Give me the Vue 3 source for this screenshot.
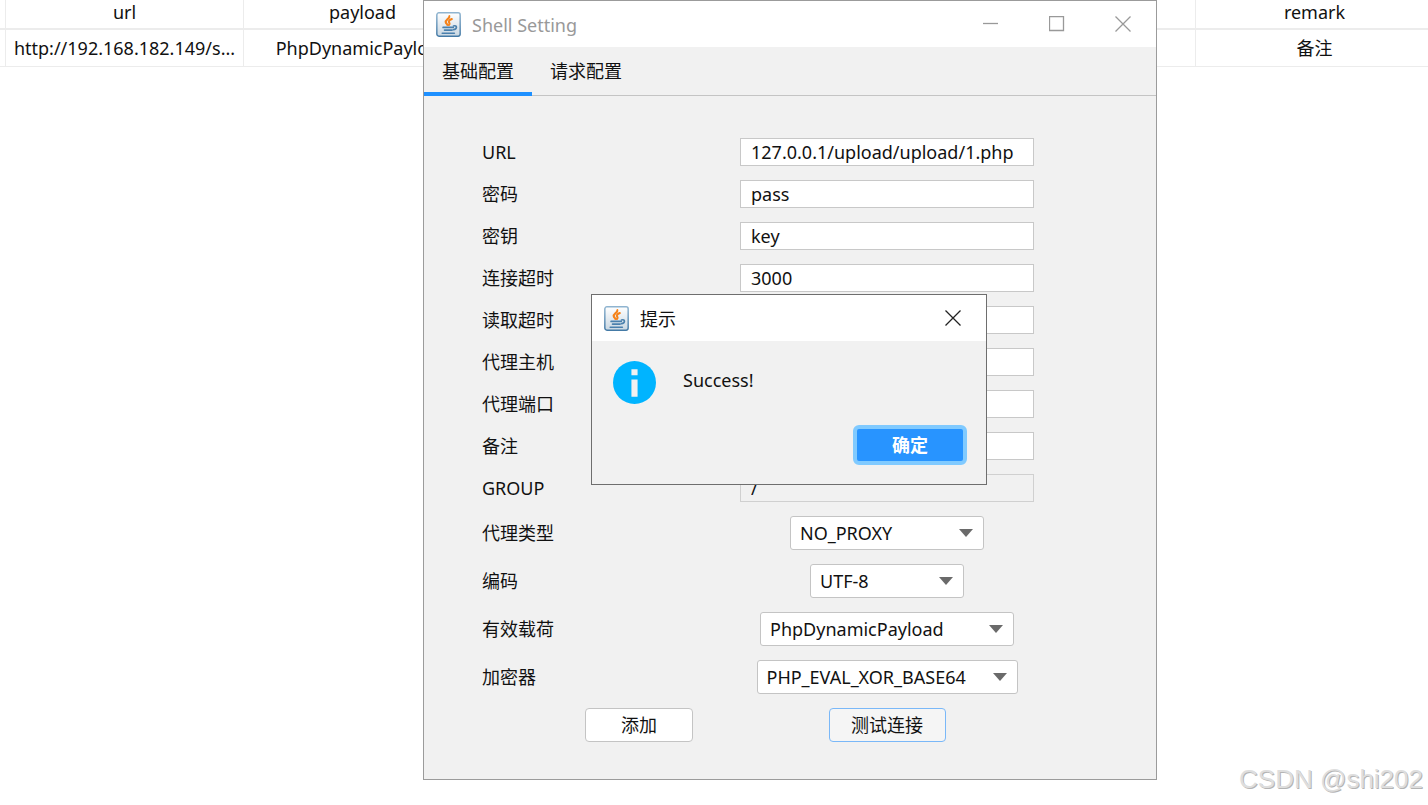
<template>
    <main class="desktop">
        <div class="shells">
            <table>
                <colgroup>
                    <col class="edge">
                    <col v-for="n in 6" :key="n">
                </colgroup>
                <thead>
                    <tr><th v-for="(name, i) in columns" :key="i">{{name}}</th></tr>
                </thead>
                <tbody>
                    <tr><td v-for="(cell, i) in shell" :key="i">{{cell}}</td></tr>
                </tbody>
            </table>
        </div>

        <section class="window setting">
            <header class="title-bar">
                <svg class="java" viewBox="0 0 24 24">
                    <use href="#java-cup" />
                </svg>
                <h1 class="title muted">Shell Setting</h1>
                <button class="win-btn" aria-label="Minimize">
                    <svg viewBox="0 0 16 16"><path d="M0 7.5H15" /></svg>
                </button>
                <button class="win-btn" aria-label="Maximize">
                    <svg viewBox="0 0 16 16"><path d="M.5 .5H14.5V14.5H.5Z" /></svg>
                </button>
                <button class="win-btn" aria-label="Close">
                    <svg viewBox="0 0 16 16"><path d="M.5 .5L15.5 15.5M15.5 .5L.5 15.5" /></svg>
                </button>
            </header>

            <nav class="tabs">
                <button v-for="tab in tabs" :key="tab" class="tab" :class="{active: tab === curTab}" @click="curTab = tab">{{tab}}</button>
            </nav>

            <form @submit.prevent="showTip = true">
                <div class="fields">
                    <div v-for="f in fields" :key="f.id" class="row">
                        <label :for="f.id">{{f.label}}</label>
                        <input :id="f.id" v-model="f.value" type="text" :disabled="f.disabled">
                    </div>
                    <div v-for="s in selects" :key="s.id" class="row">
                        <label :for="s.id">{{s.label}}</label>
                        <div class="combo" :style="{width: s.width + 'px'}">
                            <select :id="s.id" v-model="s.value">
                                <option>{{s.value}}</option>
                            </select>
                            <svg class="arrow" viewBox="0 0 14 8"><path d="M0 0H14L7 8Z" /></svg>
                        </div>
                    </div>
                </div>
                <div class="actions">
                    <button type="button" class="btn add">添加</button>
                    <button type="submit" class="btn test">测试连接</button>
                </div>
            </form>
        </section>

        <section v-if="showTip" class="window tip" role="dialog" aria-labelledby="tip-title">
            <header class="title-bar">
                <svg class="java" viewBox="0 0 24 24">
                    <use href="#java-cup" />
                </svg>
                <h2 id="tip-title" class="title">提示</h2>
                <button class="win-btn dark" aria-label="Close" @click="showTip = false">
                    <svg viewBox="0 0 16 16"><path d="M.5 .5L15.5 15.5M15.5 .5L.5 15.5" /></svg>
                </button>
            </header>
            <div class="message">
                <svg class="info" viewBox="0 0 42 42">
                    <circle cx="21" cy="21" r="21" fill="#00b4ff" />
                    <path d="M18 8h6v6h-6zM18 18h6v17h-6z" fill="#f1f1f1" />
                </svg>
                <p>Success!</p>
            </div>
            <div class="tip-actions">
                <button class="ok" @click="showTip = false">确定</button>
            </div>
        </section>

        <div class="watermark">CSDN @shi202</div>

        <svg class="defs" aria-hidden="true">
            <defs>
                <linearGradient id="java-bg" x1="0" y1="0" x2="0" y2="1">
                    <stop offset="0" stop-color="#ffffff" />
                    <stop offset="1" stop-color="#c9d7e2" />
                </linearGradient>
                <linearGradient id="java-edge" x1="0" y1="0" x2="0" y2="1">
                    <stop offset="0" stop-color="#8fb4d0" />
                    <stop offset="1" stop-color="#447aa6" />
                </linearGradient>
                <symbol id="java-cup" viewBox="0 0 24 24">
                    <rect x=".8" y=".8" width="22.4" height="22.4" rx="2" fill="url(#java-bg)" stroke="url(#java-edge)" stroke-width="1.4" />
                    <g fill="none" stroke="#f58219" stroke-width="2" stroke-linecap="round">
                        <path d="M12.8 4C13.4 6.4 8.6 7.4 9.4 10C9.7 11 10.6 11.6 11 12.4" />
                        <path d="M15.2 6.8C12.2 8 11.8 9.2 12.8 10.4C13.4 11.2 13 11.8 12.4 12.4" />
                    </g>
                    <g fill="none" stroke="#4a80ad" stroke-width="1.6" stroke-linecap="round">
                        <path d="M6.8 14.8H16.6M8.2 17.4H15.4M6 20.4H17.6" />
                        <path d="M16.8 13.4C20.6 12.4 20.6 16.4 16.6 17" />
                    </g>
                </symbol>
            </defs>
        </svg>
    </main>
</template>

<script setup>
    import {ref} from "vue";

    const columns = ['', 'url', 'payload', '', '', '', 'remark'];
    const shell = ['', 'http://192.168.182.149/s...', 'PhpDynamicPayload', '', '', '', '备注'];

    const tabs = ['基础配置', '请求配置'];
    const curTab = ref('基础配置');
    const showTip = ref(true);

    const fields = ref([
        {id: 'url', label: 'URL', value: '127.0.0.1/upload/upload/1.php'},
        {id: 'password', label: '密码', value: 'pass'},
        {id: 'secret', label: '密钥', value: 'key'},
        {id: 'conn-timeout', label: '连接超时', value: '3000'},
        {id: 'read-timeout', label: '读取超时', value: ''},
        {id: 'proxy-host', label: '代理主机', value: ''},
        {id: 'proxy-port', label: '代理端口', value: ''},
        {id: 'remark', label: '备注', value: ''},
        {id: 'group', label: 'GROUP', value: '/', disabled: true},
    ]);

    const selects = ref([
        {id: 'proxy-type', label: '代理类型', value: 'NO_PROXY', width: 194},
        {id: 'encoding', label: '编码', value: 'UTF-8', width: 154},
        {id: 'payload', label: '有效载荷', value: 'PhpDynamicPayload', width: 254},
        {id: 'cryption', label: '加密器', value: 'PHP_EVAL_XOR_BASE64', width: 261},
    ]);
</script>

<style>
    body {
        margin: 0;
        background: #fff;
    }
</style>

<style scoped>
    * {
        box-sizing: border-box;
    }

    .desktop {
        position: relative;
        min-height: 100vh;
        overflow: hidden;
        color: #111;
        font-family: 'Noto Sans', 'Noto Sans CJK SC', sans-serif;
        font-size: 18px;
        line-height: 24px;
    }

    button, input, select {
        margin: 0;
        color: inherit;
        font: inherit;
    }

    /* shell list behind the windows */
    .shells {
        overflow: hidden;
    }

    table {
        width: calc(100% + 6px);
        table-layout: fixed;
        border-collapse: separate;
        border-spacing: 0;
    }

    .edge {
        width: 6px;
    }

    th, td {
        padding: 0 4px;
        border-right: 1px solid #ececec;
        text-align: center;
        white-space: nowrap;
    }

    th:first-child, td:first-child {
        padding: 0;
    }

    th {
        height: 30px;
        padding-bottom: 4px;
        border-bottom: 2px solid #ececec;
        font-weight: normal;
    }

    td {
        height: 37px;
        border-bottom: 1px solid #ececec;
    }

    /* windows */
    .window {
        position: absolute;
        border: 1px solid #9b9b9b;
        background: #f1f1f1;
    }

    .setting {
        top: 0;
        left: 423px;
        width: 734px;
    }

    .title-bar {
        display: flex;
        align-items: center;
        height: 46px;
        padding-left: 12px;
        background: #fff;
    }

    .java {
        width: 25px;
        height: 25px;
    }

    .title {
        flex: 1;
        margin: 1px 0 0 11px;
        font-size: 18px;
        font-weight: normal;
    }

    .muted {
        color: #999;
    }

    .win-btn {
        display: flex;
        align-items: center;
        justify-content: center;
        width: 66px;
        height: 46px;
        padding: 0;
        border: none;
        background: none;
    }

    .win-btn svg {
        width: 16px;
        height: 16px;
        fill: none;
        stroke: #999;
        stroke-width: 1.3;
    }

    .win-btn.dark svg {
        stroke: #222;
    }

    .tabs {
        display: flex;
        height: 49px;
        border-bottom: 1px solid #c4c4c4;
    }

    .tab {
        width: 108px;
        height: 49px;
        padding: 3px 0 0;
        border: none;
        border-bottom: 4px solid transparent;
        background: none;
    }

    .tab.active {
        border-bottom-color: #1e90ff;
    }

    /* form */
    .fields {
        display: grid;
        gap: 14px;
        padding: 42px 122px 14px 58px;
    }

    .row {
        display: grid;
        grid-template-columns: 1fr 294px;
        align-items: center;
    }

    input {
        width: 100%;
        height: 28px;
        padding: 0 10px;
        border: 1px solid #c8c8c8;
        background: #fff;
    }

    input:disabled {
        border-color: #d0d0d0;
        background: #f1f1f1;
    }

    .combo {
        position: relative;
        justify-self: center;
    }

    select {
        display: block;
        width: 100%;
        height: 34px;
        padding: 0 36px 0 9px;
        border: 1px solid #c4c4c4;
        border-radius: 3px;
        background: #fff;
        appearance: none;
    }

    .arrow {
        position: absolute;
        top: 13px;
        right: 11px;
        width: 14px;
        height: 8px;
        fill: #6a6a6a;
        pointer-events: none;
    }

    .actions {
        display: grid;
        grid-template-columns: 1fr 1fr;
        justify-items: center;
        padding: 0 145px 37px 91px;
    }

    .btn {
        height: 34px;
        padding: 0;
        border: 1px solid #c4c4c4;
        border-radius: 4px;
        background: #fff;
    }

    .add {
        width: 108px;
    }

    .test {
        width: 117px;
        border-color: #7ab8f8;
        background: #f5f5f5;
    }

    /* message dialog */
    .tip {
        top: 294px;
        left: 591px;
        width: 396px;
        border-color: #6e6e6e;
    }

    .message {
        display: flex;
        gap: 27px;
        padding: 20px 21px;
    }

    .info {
        width: 43px;
        height: 43px;
    }

    .message p {
        margin: 7px 0 0;
    }

    .tip-actions {
        display: flex;
        justify-content: flex-end;
        padding: 1px 19px 19px;
    }

    .ok {
        width: 114px;
        height: 40px;
        padding: 0;
        border: 4px solid #80caff;
        border-radius: 6px;
        background: #2894ff;
        color: #fff;
        font-weight: bold;
    }

    .watermark {
        position: absolute;
        right: 5px;
        bottom: 11px;
        color: #dedede;
        font-family: 'Liberation Sans', sans-serif;
        font-size: 26px;
        line-height: 30px;
        text-shadow: 1px 1px 0 #b4b4b4;
    }

    .defs {
        position: absolute;
        width: 0;
        height: 0;
    }
</style>
